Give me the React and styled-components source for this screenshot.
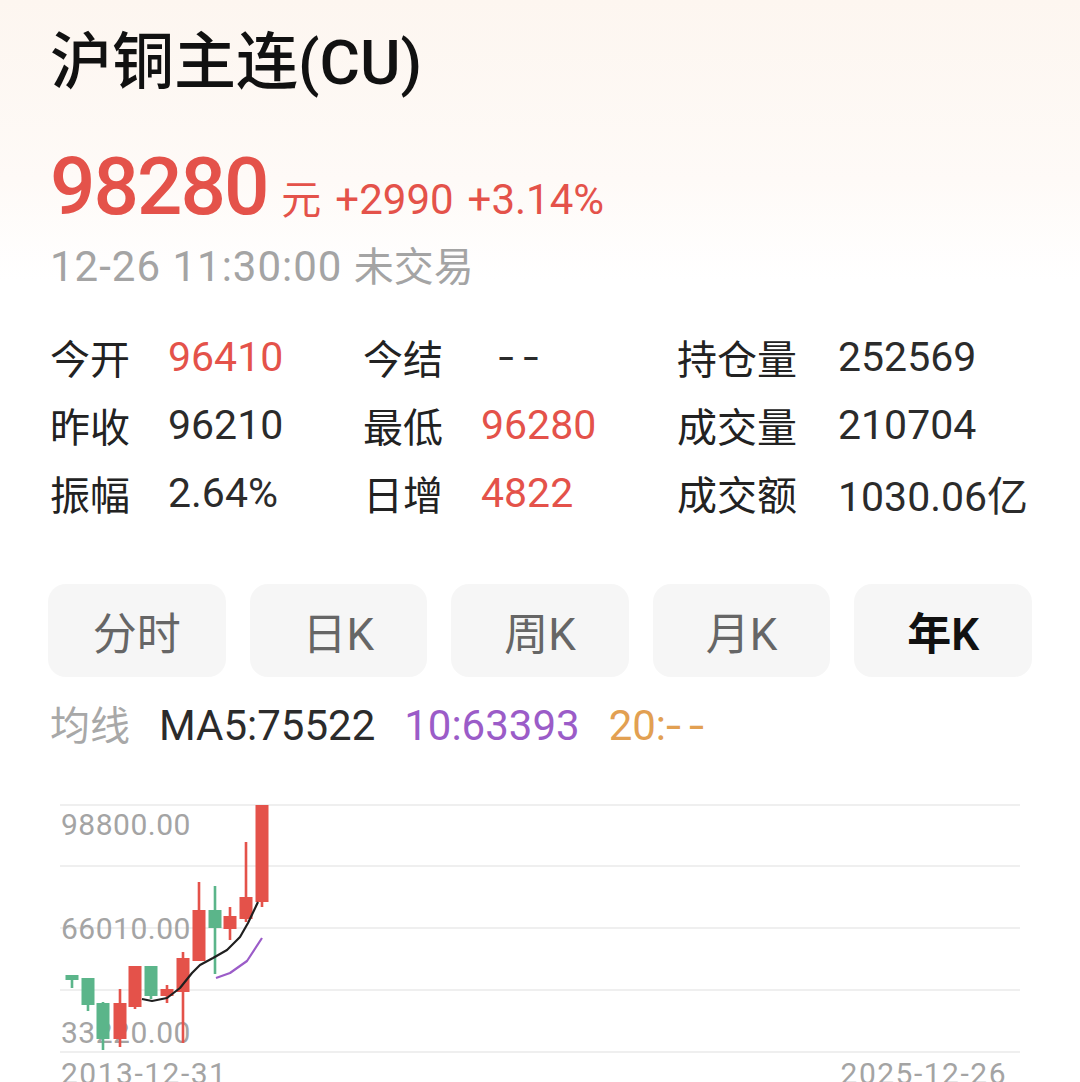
import styled, { createGlobalStyle } from "styled-components"

const Global = createGlobalStyle`
  html, body { margin: 0; padding: 0; background: #fff; }
  body { font-family: Roboto, "Noto Sans CJK SC", sans-serif; }
`

const RED = "#e4524a"
const GREEN = "#5bb58a"

const Page = styled.div`
  width: 1080px;
  height: 1082px;
  overflow: hidden;
  background: linear-gradient(180deg, #fdf6f0 0px, #fefaf7 180px, #ffffff 280px);
`
const Header = styled.div`
  padding: 28px 48px 0 50px;
`
const Title = styled.h1`
  margin: 0;
  font-size: 62px;
  line-height: 70px;
  font-weight: 500;
  color: #111;
`
const PriceRow = styled.div`
  display: flex;
  align-items: baseline;
  margin-top: 42px;
  height: 86px;
  color: ${RED};
`
const Price = styled.span`
  font-size: 80px;
  font-weight: 500;
  letter-spacing: -2px;
`
const Unit = styled.span`
  font-size: 40px;
  margin-left: 14px;
`
const Change = styled.span`
  font-size: 42px;
  margin-left: 14px;
`
const DateLine = styled.div`
  font-size: 42px;
  letter-spacing: 1px;
  color: #a4a4a4;
  line-height: 50px;
  margin-top: 16px;
  span { font-size: 40px; letter-spacing: 0; }
`

const Stats = styled.div`
  display: grid;
  grid-template-columns: 313px 314px auto;
  grid-auto-rows: 68px;
  padding: 30px 0 0 50px;
`
const Cell = styled.div`
  display: flex;
  align-items: center;
  gap: 38px;
`
const Label = styled.span`
  font-size: 40px;
  color: #222;
  min-width: ${p => p.wide ? "123px" : "80px"};
`
const Value = styled.span`
  font-size: 41px;
  color: ${p => p.red ? RED : "#2b2b2b"};
  padding-left: ${p => p.dashes ? "13px" : "0"};
  letter-spacing: ${p => p.dashes ? "7px" : "0"};
  transform: ${p => p.dashes ? "scaleX(1.35)" : "none"};
  transform-origin: left center;
`

const Tabs = styled.div`
  display: grid;
  grid-template-columns: repeat(5, 1fr);
  gap: 24px;
  padding: 57px 48px 0 48px;
`
const Tab = styled.div`
  height: 93px;
  border-radius: 18px;
  background: #f6f6f6;
  display: flex;
  align-items: center;
  justify-content: center;
  font-size: 44px;
  color: ${p => p.active ? "#111" : "#666"};
  font-weight: ${p => p.active ? 600 : 400};
`

const MaRow = styled.div`
  display: flex;
  align-items: baseline;
  gap: 29px;
  padding: 17px 0 0 50px;
  height: 60px;
`
const MaItem = styled.span`
  color: ${p => p.color};
  font-size: ${p => p.cjk ? "40px" : "42px"};
  em { font-style: normal; letter-spacing: 6px; display: inline-block; transform: scaleX(1.3); transform-origin: left; }
`

const ChartBox = styled.div`
  margin-top: 36px;
  height: 300px;
`

const candles = [
  [72, 975, 980, 975, 988, 0],
  [88, 978, 1005, 978, 1011, 0],
  [103, 1003, 1039, 1002, 1050, 0],
  [120, 1003, 1039, 989, 1047, 1],
  [135, 966, 1007, 966, 1009, 1],
  [151, 966, 996, 966, 999, 0],
  [167, 989, 996, 985, 1003, 1],
  [183, 958, 992, 952, 1043, 1],
  [199, 910, 961, 882, 961, 1],
  [215, 910, 928, 886, 974, 0],
  [230, 916, 929, 907, 940, 1],
  [246, 897, 919, 842, 922, 1],
  [262, 805, 902, 805, 907, 1],
]

const ma5 = "142,999 152,1001 167,998 180,988 192,973 200,965 213,958 227,950 240,937 248,923 258,902"
const ma10 = "216,978 230,973 247,961 262,938"

function Chart() {
  const grid = [805, 866, 928, 990, 1052]
  return (
    <ChartBox>
      <svg width="1080" height="300" viewBox="0 790 1080 300">
        {grid.map(y => <line key={y} x1="60" x2="1020" y1={y} y2={y} stroke="#efefef" strokeWidth="2" />)}
        <g fontFamily="Roboto, sans-serif" fontSize="30" fill="#a4a4a4" letterSpacing="0.5">
          <text x="61" y="835">98800.00</text>
          <text x="61" y="939">66010.00</text>
          <text x="61" y="1043">33220.00</text>
          <text x="61" y="1084" letterSpacing="1.5">2013-12-31</text>
          <text x="1007" y="1084" textAnchor="end" letterSpacing="1.5">2025-12-26</text>
        </g>
        {candles.map(([x, bt, bb, wt, wb, up], i) => (
          <g key={i} fill={up ? RED : GREEN}>
            <rect x={x - 1.3} y={wt} width="2.6" height={wb - wt} />
            <rect x={x - 6.5} y={bt} width="13" height={Math.max(bb - bt, 3)} />
          </g>
        ))}
        <polyline points={ma5} fill="none" stroke="#1f1f1f" strokeWidth="2.2" strokeLinejoin="round" />
        <polyline points={ma10} fill="none" stroke="#9b5cc8" strokeWidth="2.2" strokeLinejoin="round" />
      </svg>
    </ChartBox>
  )
}

export default function App() {
  const stats = [
    ["今开", "96410", true], ["今结", "--", false, true], ["持仓量", "252569"],
    ["昨收", "96210"], ["最低", "96280", true], ["成交量", "210704"],
    ["振幅", "2.64%"], ["日增", "4822", true], ["成交额", "1030.06亿"],
  ]
  const tabs = ["分时", "日K", "周K", "月K", "年K"]

  return (
    <Page>
      <Global />
      <Header>
        <Title>沪铜主连(CU)</Title>
        <PriceRow>
          <Price>98280</Price>
          <Unit>元</Unit>
          <Change>+2990</Change>
          <Change>+3.14%</Change>
        </PriceRow>
        <DateLine>12-26 11:30:00 <span>未交易</span></DateLine>
      </Header>
      <Stats>
        {stats.map(([label, value, red, dashes]) => (
          <Cell key={label}>
            <Label wide={label.length > 2}>{label}</Label>
            <Value red={red} dashes={dashes}>{value}</Value>
          </Cell>
        ))}
      </Stats>
      <Tabs>
        {tabs.map(t => <Tab key={t} active={t === "年K"}>{t}</Tab>)}
      </Tabs>
      <MaRow>
        <MaItem cjk color="#a8a8a8">均线</MaItem>
        <MaItem color="#2b2b2b">MA5:75522</MaItem>
        <MaItem color="#9b5cc8">10:63393</MaItem>
        <MaItem color="#e2a052">20:<em>--</em></MaItem>
      </MaRow>
      <Chart />
    </Page>
  )
}
